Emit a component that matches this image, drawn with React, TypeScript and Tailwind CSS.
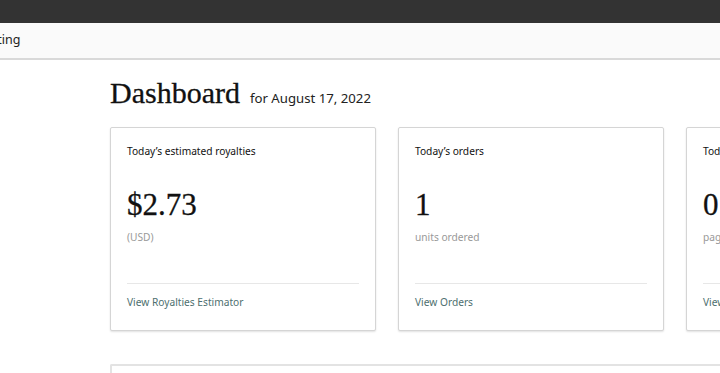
import React from "react";

const sans = "font-['Noto_Sans','Liberation_Sans',sans-serif]";
const serif = "font-['Liberation_Serif','DejaVu_Serif',serif]";

type Card = { title: string; value: string; note: string; link: string };

const cards: Card[] = [
  { title: "Today\u2019s estimated royalties", value: "$2.73", note: "(USD)", link: "View Royalties Estimator" },
  { title: "Today\u2019s orders", value: "1", note: "units ordered", link: "View Orders" },
  { title: "Today\u2019s KENP read", value: "0", note: "pages read", link: "View KENP Read" },
];

const StatCard = ({ card }: { card: Card }) => {
  return (
    <div className="w-[266px] h-[204px] shrink-0 flex flex-col bg-white border border-[#d5d5d5] rounded-[2px] shadow-[0_1px_2px_rgba(0,0,0,0.12)] px-4 pt-[15px]">
      <div className="text-[10.2px] leading-4 text-[#111]">{card.title}</div>
      <div className={`${serif} text-[31px] leading-none text-[#111] mt-[30px] [-webkit-text-stroke:0.3px_#111]`}>{card.value}</div>
      <div className="text-[10.2px] leading-4 text-[#999] mt-[9px]">{card.note}</div>
      <div className="mt-auto border-t border-[#e7e7e7] pt-[10px] pb-[20px]">
        <a className="block text-[10.2px] leading-4 text-[#4d6f6f]">{card.link}</a>
      </div>
    </div>
  );
};

export default function App() {
  return (
    <div className={`${sans} w-full min-h-screen bg-white overflow-hidden`}>
      <div className="h-[23px] bg-[#333333]" />
      <div className="h-[37px] bg-[#fafafa] border-b-2 border-[#d9d9d9] flex items-center overflow-hidden">
        <ul className="flex gap-8 text-[12.5px] text-[#222] -ml-[40px]">
          <li>Marketing</li>
        </ul>
      </div>
      <div className="pl-[110px] pt-[15px]">
        <div className="flex items-baseline gap-[10px]">
          <h1 className={`${serif} text-[30px] leading-[36px] text-[#111] [-webkit-text-stroke:0.3px_#111]`}>Dashboard</h1>
          <span className="text-[13.2px] text-[#222]">for August 17, 2022</span>
        </div>
        <div className="flex gap-[22px] mt-[16px]">
          {cards.map((c) => (
            <StatCard key={c.title} card={c} />
          ))}
        </div>
        <div className="mt-[33px] h-[40px] border-t-2 border-l-2 border-[#e3e3e3] rounded-tl-[2px]" />
      </div>
    </div>
  );
}
